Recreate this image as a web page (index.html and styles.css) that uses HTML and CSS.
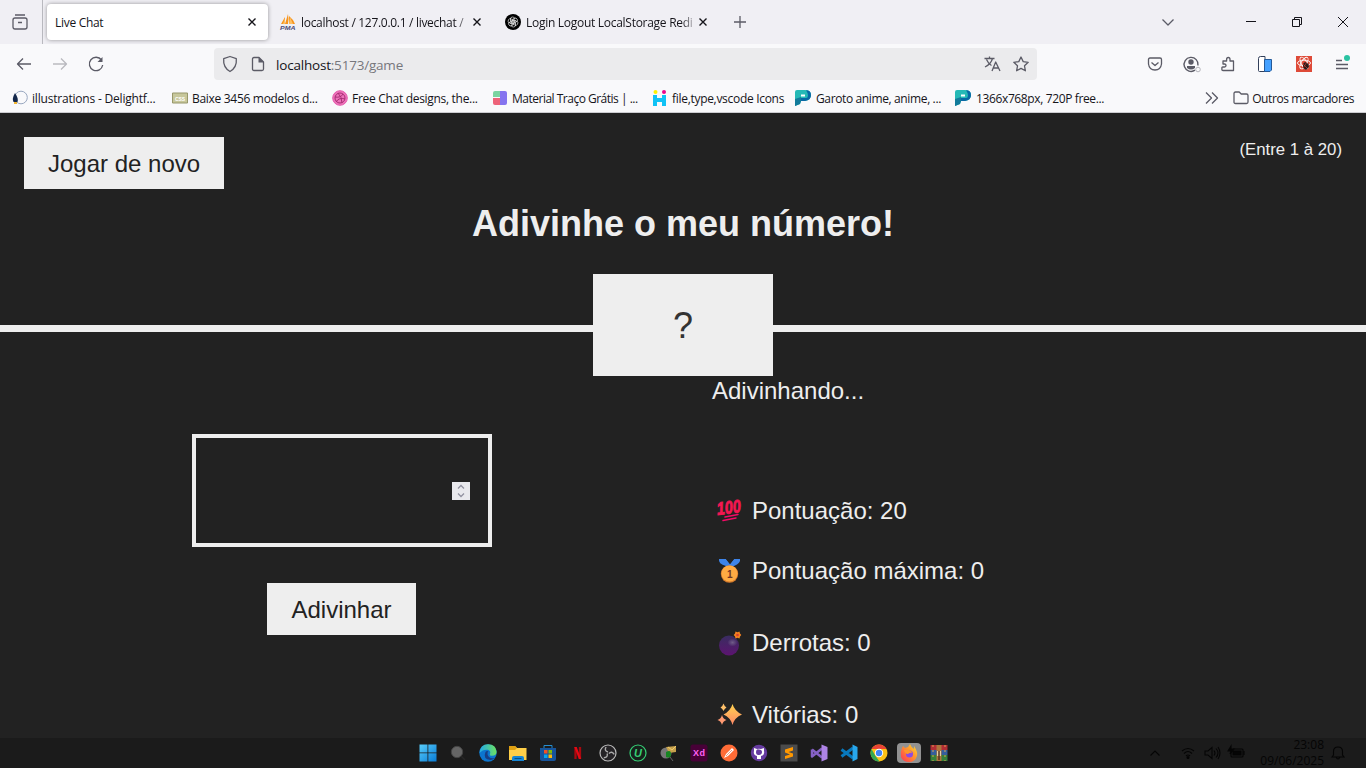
FILE: index.html
```html
<!DOCTYPE html>
<html lang="pt-BR">
<head>
<meta charset="utf-8">
<title>Live Chat</title>
<link rel="stylesheet" href="styles.css">
</head>
<body>
<div class="screen">
  <header class="browser">
    <div class="tabs">
      <div class="tab-history"><svg width="18" height="18" viewBox="0 0 18 18" class="line"><path d="M4 2h10M4 5h10q2 0 2 2v7q0 2-2 2H4q-2 0-2-2V7q0-2 2-2zM7 9.500h4"/></svg></div>
      <div class="tab active"><span class="tab-title">Live Chat</span><svg class="close" width="10" height="10" viewBox="0 0 10 10"><path d="M1.500 1.500l7 7m0-7l-7 7"/></svg></div>
      <div class="tab pma"><svg width="16" height="16" viewBox="0 0 16 16"><path d="M1 10L5 3v7zM5 10L8 0q1 5 0 10zM9 10V2q4 3 6 8z" fill="#f7941d"/><path d="M3 10l2-6v6zM9 10l1-7 3 7z" fill="#fdc064"/><text x="0" y="15.500" textLength="15.500" lengthAdjust="spacingAndGlyphs" class="pma-text">PMA</text></svg><span class="tab-title fade">localhost / 127.0.0.1 / livechat /</span><svg class="close" width="10" height="10" viewBox="0 0 10 10"><path d="M1.500 1.500l7 7m0-7l-7 7"/></svg></div>
      <div class="tab gpt"><svg width="16" height="16" viewBox="0 0 16 16"><circle cx="8" cy="8" r="8"/><g fill="none" stroke="#fff" stroke-width=".6"><path id="petal" d="M5.500 8V5q0-2 2-2t2.500 1.500L7 6.300v3.500"/><use href="#petal" transform="rotate(60 8 8)"/><use href="#petal" transform="rotate(120 8 8)"/><use href="#petal" transform="rotate(180 8 8)"/><use href="#petal" transform="rotate(240 8 8)"/><use href="#petal" transform="rotate(300 8 8)"/></g></svg><span class="tab-title fade">Login Logout LocalStorage Redi</span><svg class="close" width="10" height="10" viewBox="0 0 10 10"><path d="M1.500 1.500l7 7m0-7l-7 7"/></svg></div>
      <svg class="plus line" width="14" height="14" viewBox="0 0 14 14"><path d="M7 1v12M1 7h12"/></svg>
      <div class="window-controls">
        <svg class="line" width="14" height="14" viewBox="0 0 14 14"><path d="M1.500 4.500L7 10l5.500-5.500"/></svg>
        <svg class="sharp" width="10" height="10" viewBox="0 0 10 10"><path d="M0 4.500h10"/></svg>
        <svg class="sharp" width="10" height="10" viewBox="0 0 10 10"><path d="M.5 2.500h7v7h-7zM2.500 2.500v-2h7v7h-2"/></svg>
        <svg class="sharp" width="10" height="10" viewBox="0 0 10 10"><path d="M0 0l10 10M10 0L0 10"/></svg>
      </div>
    </div>

    <div class="nav">
      <div class="nav-buttons">
        <svg class="line" width="16" height="16" viewBox="0 0 16 16"><path d="M15 8H2M7 2.500L1.500 8 7 13.500"/></svg>
        <svg class="line muted" width="16" height="16" viewBox="0 0 16 16"><path d="M1 8h13M9 2.500L14.500 8 9 13.500"/></svg>
        <svg class="line" width="16" height="16" viewBox="0 0 16 16"><path d="M13.500 4A6.700 6.700 0 1 0 14.700 9"/><path d="M14.500 1v5h-5z" fill="#5b5b66" stroke="none"/></svg>
      </div>
      <div class="url">
        <svg class="line" width="16" height="18" viewBox="0 0 16 18"><path d="M8 1.500l6.300 2.200q.8 8.500-6.300 12.800Q.9 12.200 1.700 3.700z"/></svg>
        <svg class="line" width="14" height="16" viewBox="0 0 14 16"><path d="M3 1.500h5L12.500 6v7q0 1.500-1.500 1.500H3Q1.500 14.500 1.500 13V3Q1.500 1.500 3 1.500z"/><path d="M7.500 1v5.500H13z" fill="#5b5b66" stroke="none"/></svg>
        <span class="address"><b>localhost</b>:5173/game</span>
        <svg class="line" width="17" height="16" viewBox="0 0 17 16"><path d="M.5 2.500h10M5.500.5v2M8.500 2.500Q7 8 1 11M2.500 3.500Q4.500 8 7.500 9.500M8 15l3.700-9L16 15M9.500 12h5"/></svg>
        <svg class="line" width="16" height="16" viewBox="0 0 16 16"><path d="M8 1l2.200 4.600 5 .7-3.700 3.500.9 5L8 12.400l-4.400 2.400.9-5L.8 6.300l5-.7z"/></svg>
      </div>
      <div class="extensions">
        <svg class="line" width="16" height="16" viewBox="0 0 16 16"><path d="M3 2h10q1.500 0 1.500 1.500V8q-.8 6-6.500 6T1.500 8V3.500Q1.500 2 3 2zM4.500 6.500L8 9.500l3.500-3"/></svg>
        <svg width="19" height="17" viewBox="0 0 19 17"><path d="M12 14.200A7 7 0 1 1 15 9.500" fill="none" stroke="#5b5b66" stroke-width="1.400"/><circle cx="8" cy="6" r="2.700" fill="#5b5b66"/><path d="M4 10h8v2q-4 3-8 0z" fill="#5b5b66"/><circle cx="15" cy="13.500" r="2.300" fill="#f9f9fb" stroke="#b6b6bc"/></svg>
        <svg class="line" width="16" height="16" viewBox="0 0 16 16"><path d="M3 14.500h10.500V5H10V3.500q0-2-1.700-2T6.600 3.500V5H3v3h1.500q1.500 0 1.500 1.500T4.500 11H2.700q-.8 0-.8.800v2q0 .7 1.100.7z"/></svg>
        <svg width="16" height="16" viewBox="0 0 16 16"><path d="M1.500 2.500q0-2 2-2H8v15H2.500q-1 0-1-1z" fill="#fff" stroke="#33405b"/><path d="M7.500 3.500h7V14L13 15.500H7.500z" fill="#45a1ff" stroke="#245a99"/></svg>
        <svg width="16" height="16" viewBox="0 0 16 16"><path d="M0 0h16v16H0z" fill="#de4a38"/><g fill="none" stroke="#fff" stroke-width=".9"><ellipse cx="8" cy="7" rx="6.500" ry="2.800"/><ellipse cx="8" cy="7" rx="6.500" ry="2.800" transform="rotate(60 8 7)"/><ellipse cx="8" cy="7" rx="6.500" ry="2.800" transform="rotate(120 8 7)"/></g><path d="M7 8l2-2 2 1 1.500 1 .5 3-2 2-1 1-3-2z" fill="#291b1b"/><path d="M7 8l4 4M11 6l-4 6" stroke="#de4a38" stroke-width=".6"/></svg>
        <svg class="menu" width="16" height="18" viewBox="0 0 16 18"><path d="M1 7.500h6M1 11.500h12M1 15.500h12" stroke="#5b5b66"/><circle cx="12" cy="5" r="3" fill="#2ac3a2"/></svg>
      </div>
    </div>

    <nav class="bookmarks">
      <a class="loose"><svg width="16" height="16" viewBox="0 0 16 16"><circle cx="9" cy="7.500" r="6.300" fill="none" stroke="#9aa8c0"/><path d="M3 3q4 6 2.500 9h-4Q-.5 9 3 3z" fill="#14284b"/><path d="M2 12h3v2H2z" fill="#f2b632"/></svg><span>illustrations - Delightf...</span></a>
      <a><svg width="16" height="16" viewBox="0 0 16 16"><path d="M.5 3h15v10H.5z" fill="#c7c79b" stroke="#97976a"/><text x="3" y="10.500" textLength="10" class="css-text">CSS</text></svg><span>Baixe 3456 modelos d...</span></a>
      <a><svg width="16" height="16" viewBox="0 0 16 16"><circle cx="8" cy="8" r="7.300" fill="#ed73b9" stroke="#e65bad"/><g fill="none" stroke="#a92e76"><circle cx="8" cy="8" r="5"/><path d="M3 7q6 1 8-3M6 3q4 4 4 10M4 12q3-5 9-3"/></g></svg><span>Free Chat designs, the...</span></a>
      <a class="tight"><svg width="16" height="16" viewBox="0 0 16 16"><path d="M3 1h5v6H1V3q0-2 2-2z" fill="#7bd4a1"/><path d="M1 8h7v7H3q-2 0-2-2z" fill="#ee6379"/><path d="M8 1h5q2 0 2 2v10q0 2-2 2H8z" fill="#8574ef"/></svg><span>Material Traço Grátis | ...</span></a>
      <a class="narrow"><svg width="16" height="16" viewBox="0 0 16 16"><circle cx="3.500" cy="2" r="2" fill="#fff200"/><circle cx="12" cy="2" r="2" fill="#ed078b"/><path d="M1 5h4v3h5V5h4v11h-4v-4H5v4H1z" fill="#10c2f5"/></svg><span>file,type,vscode Icons</span></a>
      <a><svg width="16" height="16" viewBox="0 0 16 16"><path d="M2 0h8q6 0 6 5t-6 6H6l-1 3-5 2V2q0-2 2-2z" fill="#25b9b6"/><path d="M11 .3q5 0 5 5T10 11H6V8h5q2 0 2-2.500T11 .3z" fill="#0868a5"/><path d="M0 9l6-2v4l-1 3-5 2z" fill="#127b9b"/><path d="M6 4.500h4v2H6z" fill="#fff"/></svg><span>Garoto anime, anime, ...</span></a>
      <a><svg width="16" height="16" viewBox="0 0 16 16"><path d="M2 0h8q6 0 6 5t-6 6H6l-1 3-5 2V2q0-2 2-2z" fill="#25b9b6"/><path d="M11 .3q5 0 5 5T10 11H6V8h5q2 0 2-2.500T11 .3z" fill="#0868a5"/><path d="M0 9l6-2v4l-1 3-5 2z" fill="#127b9b"/><path d="M6 4.500h4v2H6z" fill="#fff"/></svg><span>1366x768px, 720P free...</span></a>
      <div class="others"><svg class="line" width="14" height="14" viewBox="0 0 14 14"><path d="M1 1.500L6.500 7 1 12.500M7 1.500L12.500 7 7 12.500"/></svg><svg class="line" width="16" height="16" viewBox="0 0 16 16"><path d="M2.500 2h3.700l2 2h5.300q1.500 0 1.500 1.500V12q0 1.500-1.500 1.500h-11Q1 13.500 1 12V3.500Q1 2 2.500 2z"/></svg><span>Outros marcadores</span></div>
    </nav>
  </header>

  <main class="game">
    <div class="top"><button class="btn">Jogar de novo</button><p class="range">(Entre 1 à 20)</p></div>
    <h1>Adivinhe o meu número!</h1>
    <div class="divider"><i></i><div class="number">?</div><i></i></div>
    <div class="columns">
      <section class="left">
        <div class="guess"><svg width="18" height="18" viewBox="0 0 18 18"><path d="M0 0h18v18H0z" fill="#e9e9ed"/><path d="M6 6.500l3-3 3 3M6 11.500l3 3 3-3" fill="none" stroke="#9292a0" stroke-width="1.300"/></svg></div>
        <button class="btn">Adivinhar</button>
      </section>
      <section class="right">
        <p class="message">Adivinhando...</p>
        <p class="stat score"><svg width="26" height="26" viewBox="0 0 26 26"><g transform="rotate(-7 13 12)"><text x="0" y="15.500" textLength="24" lengthAdjust="spacingAndGlyphs" class="hundred">100</text></g><path d="M8 19l13-2.500M6 22.500l13-2.500" stroke="#f50a66" stroke-width="1.500" stroke-linecap="round"/></svg><span>Pontuação: 20</span></p>
        <p class="stat"><svg width="26" height="26" viewBox="0 0 26 26"><path d="M2 1h7l4 5 4-5h6q1 4-6 7H9Q1 6 2 1z" fill="#3e84e8"/><path d="M9 1l4 5 4-5z" fill="#222"/><circle cx="12.500" cy="16" r="8.700" fill="#d47b2c"/><circle cx="12.500" cy="15.500" r="8" fill="#ffab43"/><text x="10" y="19.500" class="medal">1</text></svg><span>Pontuação máxima: 0</span></p>
        <p class="stat"><svg width="26" height="26" viewBox="0 0 26 26"><defs><linearGradient id="bomb" x2="0" y2="1"><stop stop-color="#392d60"/><stop offset="1" stop-color="#5c1470"/></linearGradient><radialGradient id="shine"><stop stop-color="#705b88"/><stop offset="1" stop-color="#705b88" stop-opacity="0"/></radialGradient></defs><circle cx="12" cy="15.500" r="10" fill="url(#bomb)"/><ellipse cx="15.500" cy="12.500" rx="5" ry="4" fill="url(#shine)"/><path d="M18.500 1.500l2 .7 2-.7.500 2 1.300 1.500-1.300 1.500-.5 2-2-.7-2 .7-.5-2L16.700 5 18 3.500z" fill="#f38220"/><circle cx="20.500" cy="5" r="1.300" fill="#d83c35"/></svg><span>Derrotas: 0</span></p>
        <p class="stat"><svg width="26" height="26" viewBox="0 0 26 26"><defs><linearGradient id="spark" x2="0" y2="1"><stop stop-color="#ffd34f"/><stop offset="1" stop-color="#ff8768"/></linearGradient></defs><path d="M15.500 2q2 7 9.500 10.500-7.500 3-9.500 10.500-2-7.500-9-10.500 7-3.500 9-10.500z" fill="url(#spark)"/><path d="M6.500 1.500q1 3 3 4-2 1-3 3.500-1-2.500-3-3.500 2-1 3-4z" fill="#ffc16b"/><path d="M5 13q1 4 4.500 5-3.500 1-4.500 5-1-4-4.500-5 3.500-1 4.500-5z" fill="#ff9a72"/></svg><span>Vitórias: 0</span></p>
      </section>
    </div>
  </main>

  <footer class="taskbar">
    <div class="apps">
      <svg viewBox="0 0 18 18"><defs><linearGradient id="win" x2="1" y2="1"><stop stop-color="#58cdfb"/><stop offset="1" stop-color="#087bd5"/></linearGradient></defs><path d="M.5.5h8v8h-8zM9.300.5h8.200v8H9.300zM.5 9.300h8v8.200h-8zM9.300 9.300h8.200v8.200H9.300z" fill="url(#win)"/></svg>
      <svg viewBox="0 0 18 18"><circle cx="8" cy="8" r="5.700" fill="#656565" stroke="#444"/><path d="M12 12l4 4" stroke="#262626" stroke-width="1.500"/></svg>
      <svg viewBox="0 0 18 18"><defs><linearGradient id="edge"><stop stop-color="#22a9e8"/><stop offset="1" stop-color="#6ce260"/></linearGradient></defs><circle cx="9" cy="9" r="8.700" fill="#0c75cf"/><path d="M.5 9Q1 .4 9 .3t8.600 7.500q0 4-4.600 4-3 0-2-2 1-3-2-4Q4 5 .5 9z" fill="url(#edge)"/><path d="M6.500 8q-3 7 5 8 3-.3 4.500-2-7 1-7.500-4 0-3 1-3-2-.5-3 1z" fill="#173f86"/></svg>
      <svg viewBox="0 0 18 18"><path d="M0 2h6l2 2h9.500v12H0z" fill="#ffcf48"/><path d="M0 2h6l2 2-2 2H0z" fill="#dfa012"/><path d="M3 17v-3q0-2 2-2h8q2 0 2 2v3z" fill="#1686d5"/><path d="M5.500 14.500h7" stroke="#075188"/></svg>
      <svg viewBox="0 0 18 18"><path d="M5 4V1.500h8V4" fill="none" stroke="#258ed0"/><path d="M1 4h16v11q0 2-2 2H3q-2 0-2-2z" fill="#17549b"/><path d="M5 6h3.500v3.500H5z" fill="#f35325"/><path d="M9.500 6H13v3.500H9.500z" fill="#81bc06"/><path d="M5 10.500h3.500V14H5z" fill="#05a6f0"/><path d="M9.500 10.500H13V14H9.500z" fill="#ffba08"/></svg>
      <svg viewBox="0 0 18 18"><path d="M6.500 3v12M11 3v12" stroke="#a9080f" stroke-width="2.300"/><path d="M5.300 3h2.400l4.500 12H9.800z" fill="#e50914"/></svg>
      <svg viewBox="0 0 18 18"><circle cx="9" cy="9" r="8" fill="#252326" stroke="#bbb" stroke-width="1.200"/><g fill="none" stroke="#aaa" stroke-width="1.400"><path id="blade" d="M9 8Q5 7 7 3"/><use href="#blade" transform="rotate(120 9 9)"/><use href="#blade" transform="rotate(240 9 9)"/></g></svg>
      <svg viewBox="0 0 18 18"><circle cx="9" cy="9" r="8" fill="#17211c" stroke="#36cf75" stroke-width="1.200"/><text x="5" y="13" class="u-text">U</text></svg>
      <svg viewBox="0 0 18 18"><circle cx="6" cy="9" r="5.500" fill="#777"/><path d="M6 3l10-1v6l-7 1z" fill="#c6a14c"/><path d="M8 3l4 3 4-4" fill="none" stroke="#f0cc70"/><path d="M6 8q5-3 5 2t-5 3z" fill="#178522"/><path d="M10 13l3 4" stroke="#666" stroke-width="1"/></svg>
      <svg viewBox="0 0 18 18"><path d="M3 .5h12q2.500 0 2.500 2.500v12q0 2.500-2.500 2.500H3Q.5 17.500.5 15V3Q.5.500 3 .5z" fill="#470137"/><text x="3" y="12" textLength="12" class="xd-text">Xd</text></svg>
      <svg viewBox="0 0 18 18"><circle cx="9" cy="9" r="8.500" fill="#ff6c37"/><path d="M4 14l2-4 6-6 2 2-6 6z" fill="#fff"/><path d="M6 12l6-6" stroke="#e4a08a"/></svg>
      <svg viewBox="0 0 18 18"><circle cx="9" cy="9" r="8.200" fill="#663ba0"/><path d="M7 15v-3q-4-1-3-5V4l3 1q2-.5 4 0l3-1v3q1 4-3 5v3z" fill="#fff"/><path d="M9 5.500q3 0 3 2.500t-3 3-3-3 3-2.500z" fill="#663ba0"/></svg>
      <svg viewBox="0 0 18 18"><path d="M.5.500h17v17H.5z" fill="#4b4b4b"/><path d="M13 3L5 5.500v3l5 2-5 1.500v3l8-2.500v-3L8.500 8 13 6.500z" fill="#ff9800"/></svg>
      <svg viewBox="0 0 18 18"><path d="M2 5.500v7L12 4.500M2 5.500l10 8" fill="none" stroke="#8662c6" stroke-width="2.500" stroke-linejoin="round"/><path d="M11.500.5L17.500 3v12l-6 2.500z" fill="#ae83e5"/></svg>
      <svg viewBox="0 0 18 18"><path d="M1.500 5.500l11.500 8.500M1.500 12.500L13 4" stroke="#0879bd" stroke-width="3"/><path d="M12.500.5L17.500 3v12l-5 2.500z" fill="#28a7ec"/></svg>
      <svg viewBox="0 0 18 18"><circle cx="9" cy="9" r="8.500" fill="#fbc117"/><path d="M1.500 5A8.500 8.500 0 0 1 16.500 5H9z" fill="#ea4335"/><path d="M1.500 5L5.500 12l4 5.500A8.500 8.500 0 0 1 1.500 5z" fill="#34a853"/><circle cx="9" cy="9" r="4.200" fill="#fff"/><circle cx="9" cy="9" r="3.200" fill="#4285f4"/></svg>
      <span class="running"><svg viewBox="0 0 18 18"><defs><linearGradient id="fox" x1="1" x2="0" y2="1"><stop stop-color="#ffdf35"/><stop offset=".4" stop-color="#ff9a2c"/><stop offset="1" stop-color="#ff3158"/></linearGradient></defs><path d="M2 4l1-2 2 2 3-1 2-3q1 3 4 5V2q4 6 3 10-2 6-8 6T1 13Q0 8 2 4z" fill="url(#fox)"/><circle cx="9.500" cy="10" r="3.500" fill="#8c4be3"/><path d="M4 6h5q3 1 3 3-2-1-4 1-3 0-4-4z" fill="#ff9828"/></svg></span>
      <svg viewBox="0 0 18 18"><path d="M.5 1h17v5H.5z" fill="#b12d35"/><path d="M.5 6h17v5H.5z" fill="#355e9d"/><path d="M.5 11h17v6H.5z" fill="#35803b"/><path d="M6.500 1h5v16h-5z" fill="#ae743c"/><path d="M3 1v16M15 1v16" stroke="#d6a451" stroke-dasharray="2 3"/><path d="M7 7h4v5H7z" fill="#e4d1a1"/><path d="M9 7v9" stroke="#532" stroke-width="1.500"/></svg>
    </div>
    <div class="tray">
      <svg width="12" height="12" viewBox="0 0 12 12"><path d="M1.500 8.500L6 4l4.500 4.500"/></svg>
      <svg width="14" height="14" viewBox="0 0 14 14"><path d="M1 5q6-5 12 0M3 7.500q4-4 8 0M5 10q2-2 4 0"/><circle cx="7" cy="11.500" r="1" fill="#050505"/></svg>
      <svg width="17" height="14" viewBox="0 0 17 14"><path d="M1 5h3l4-3.500v11L4 9H1zM10 4.500q2 2.500 0 5M12 2.500q4 4.500 0 9M14 1q4 6 0 12"/></svg>
      <svg width="18" height="14" viewBox="0 0 18 14"><path d="M5 3h9q1 0 1 1v6q0 1-1 1H4q-1 0-1-1V6"/><path d="M5 5h8v4H5zM3 0L0 5h3L2 8l4-5H3zM16 5v4" fill="#050505"/></svg>
      <div class="clock"><span>23:08</span><span>09/06/2025</span></div>
      <svg width="14" height="16" viewBox="0 0 14 16"><path d="M1 12l1.500-2V6.500Q2.500 2 7 2t4.500 4.500V10l1.500 2zM5 12q2 4 4 0"/></svg>
    </div>
  </footer>
</div>
</body>
</html>
```
FILE: styles.css
```css
* { box-sizing: border-box; }
body { margin: 0; overflow: hidden; font-family: "Liberation Sans", Arial, sans-serif; }
p, h1 { margin: 0; font-weight: 400; }
svg { display: block; flex: none; overflow: visible; }
.screen { width: 1366px; height: 768px; display: flex; flex-direction: column; background: #222; overflow: hidden; }
.line { fill: none; stroke: #5b5b66; stroke-width: 1.3; stroke-linejoin: round; }
.muted { opacity: .4; }

.browser { height: 113px; flex: none; background: #f9f9fb; border-bottom: 1px solid #ccccd0; color: #15141a; font-family: "Open Sans", "Noto Sans", sans-serif; font-size: 12px; letter-spacing: -.3px; white-space: nowrap; }
.tabs { height: 44px; background: #f0eff4; display: flex; align-items: center; }
.tab-history { width: 43px; height: 44px; border-right: 1px solid #b9b9bf; padding: 13px 11px; }
.tab { display: flex; align-items: center; height: 36px; }
.active { width: 221px; margin-left: 4px; padding: 0 11px 0 8px; background: #fff; border-radius: 4px; box-shadow: 0 0 4px rgba(0,0,0,.38); }
.tab-title { flex: 1; margin-right: 5px; padding-top: 1px; }
.tab svg + .tab-title { margin-left: 5px; }
.fade { -webkit-mask-image: linear-gradient(90deg, #000 93%, transparent 103%); mask-image: linear-gradient(90deg, #000 93%, transparent 103%); }
.close { fill: none; stroke: #15141a; stroke-width: 1.4; }
.pma { width: 202px; margin-left: 12px; }
.gpt { width: 202px; margin-left: 23px; }
.gpt .tab-title { letter-spacing: -.28px; }
.pma-text { font: italic bold 6px "Liberation Sans", sans-serif; fill: #4b4b79; letter-spacing: 0; }
.plus { margin-left: 26px; }
.window-controls { margin-left: auto; padding-right: 18px; display: flex; align-items: center; }
.window-controls svg { margin-left: 36px; }
.window-controls svg:nth-child(2) { margin-left: 71px; }
.sharp { fill: none; stroke: #15141a; stroke-width: 1; }

.nav { height: 40px; display: flex; align-items: center; }
.nav-buttons { width: 214px; display: flex; gap: 20px; padding-left: 16px; }
.url { width: 823px; height: 32px; background: #ebebed; border-radius: 4px; display: flex; align-items: center; padding: 0 8px; }
.url svg:nth-child(2) { margin: 0 11px 0 13px; }
.address { flex: 1; font-size: 13.5px; letter-spacing: -.2px; color: #77777d; padding-top: 2px; }
.address b { font-weight: 400; color: #15141a; }
.url svg:last-child { margin-left: 12px; }
.extensions { margin-left: auto; padding-right: 15px; display: flex; align-items: center; gap: 22px; }
.extensions svg:nth-child(1) { margin-right: -2px; }
.extensions svg:nth-child(2) { margin-right: -4px; }
.extensions svg:nth-child(4) { margin: 0 1px 0 -1px; }
.menu { fill: none; stroke-width: 1.4; margin: -5px 0 0 1px; }

.bookmarks { height: 28px; display: flex; align-items: center; padding: 0 12px; }
.bookmarks a { width: 160px; display: flex; align-items: center; gap: 4px; }
.bookmarks a:nth-child(n+6) svg { margin-left: -1px; margin-right: 1px; }
.bookmarks a:nth-child(n+6) { letter-spacing: -.37px; }
.bookmarks .loose { letter-spacing: -.2px; }
.bookmarks .tight { letter-spacing: -.5px; }
.bookmarks .narrow { width: 144px; }
.others { margin-left: auto; display: flex; align-items: center; letter-spacing: -.42px; }
.others svg:nth-child(2) { margin: 0 3px 0 14px; }
.css-text { font: bold 5px "Liberation Sans", sans-serif; fill: #fff; letter-spacing: 0; }

.game { flex: 1; color: #eee; font-size: 24px; }
.top { height: 76px; padding: 24px 24px 0; display: flex; justify-content: space-between; align-items: flex-start; }
.btn { border: 0; background: #eee; color: #222; height: 52px; padding: 2px 24px 0; font: 24px "Liberation Sans", Arial, sans-serif; }
.range { font-size: 16.8px; line-height: 25px; }
h1 { height: 85px; padding-top: 15px; font-size: 36px; line-height: 40px; font-weight: 700; text-align: center; }
.divider { height: 102px; display: flex; align-items: center; }
.divider i { flex: 1; height: 7px; margin-top: 7px; background: #eee; }
.number { width: 180px; height: 102px; background: #eee; color: #333; display: flex; align-items: center; justify-content: center; font-size: 36px; padding-top: 2px; }
.columns { display: flex; height: 362px; }
.left { width: 713px; padding: 58px 0 0 192px; }
.guess { width: 300px; height: 113px; border: 4px solid #eee; padding: 44px 18px; display: flex; justify-content: flex-end; }
.left .btn { display: block; width: 149px; margin: 36px 0 0 75px; }
.message { height: 99px; line-height: 30px; margin-left: -1px; }
.stat { display: flex; align-items: center; gap: 9px; height: 72px; padding-left: 4px; line-height: 30px; }
.score { margin-bottom: -12px; }
.hundred { font: italic bold 18px "Liberation Sans", sans-serif; fill: #f51752; stroke: #f51752; stroke-width: .8; }
.medal { font: bold 10px "Liberation Sans", sans-serif; fill: #713725; }

.taskbar { height: 30px; flex: none; background: #1b1b1b; display: flex; padding-left: 419px; }
.apps { display: flex; align-items: center; gap: 12.07px; height: 30px; }
.apps svg { width: 18px; height: 18px; }
.running { width: 24px; height: 20px; margin: 0 -3px; padding: 1px 3px; border-radius: 4px; background: #929292; }
.u-text { font: italic bold 11px "Liberation Sans", sans-serif; fill: #36cf75; }
.xd-text { font: bold 9px "Liberation Sans", sans-serif; fill: #ff61f6; }
.tray { margin-left: auto; padding-right: 21px; display: flex; align-items: center; color: #050505; }
.tray svg { fill: none; stroke: #050505; stroke-width: 1.1; }
.tray svg:nth-child(2) { margin: 0 9px 0 20px; }
.tray svg:nth-child(4) { margin: 0 0 0 7px; }
.clock { width: 78px; margin-right: 7px; text-align: right; display: flex; flex-direction: column; font: 12px/16px "Open Sans", sans-serif; }
```
